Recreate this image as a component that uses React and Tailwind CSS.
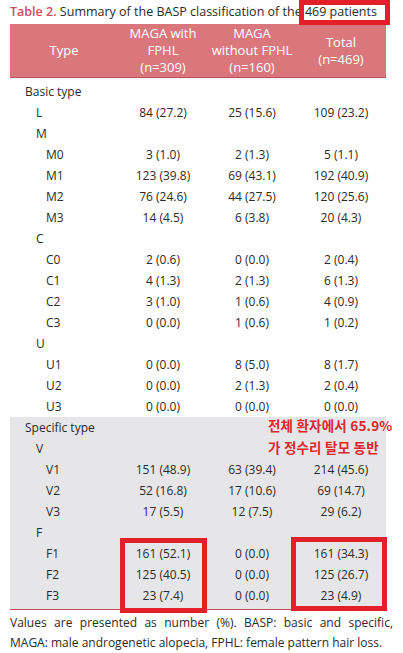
import React from 'react';

const basic = [
  ['Basic type', 0],
  ['L', 1, ['84 (27.2)', '25 (15.6)', '109 (23.2)']],
  ['M', 1],
  ['M0', 2, ['3 (1.0)', '2 (1.3)', '5 (1.1)']],
  ['M1', 2, ['123 (39.8)', '69 (43.1)', '192 (40.9)']],
  ['M2', 2, ['76 (24.6)', '44 (27.5)', '120 (25.6)']],
  ['M3', 2, ['14 (4.5)', '6 (3.8)', '20 (4.3)']],
  ['C', 1],
  ['C0', 2, ['2 (0.6)', '0 (0.0)', '2 (0.4)']],
  ['C1', 2, ['4 (1.3)', '2 (1.3)', '6 (1.3)']],
  ['C2', 2, ['3 (1.0)', '1 (0.6)', '4 (0.9)']],
  ['C3', 2, ['0 (0.0)', '1 (0.6)', '1 (0.2)']],
  ['U', 1],
  ['U1', 2, ['0 (0.0)', '8 (5.0)', '8 (1.7)']],
  ['U2', 2, ['0 (0.0)', '2 (1.3)', '2 (0.4)']],
  ['U3', 2, ['0 (0.0)', '0 (0.0)', '0 (0.0)']],
];

const specific = [
  ['Specific type', 0],
  ['V', 1],
  ['V1', 2, ['151 (48.9)', '63 (39.4)', '214 (45.6)']],
  ['V2', 2, ['52 (16.8)', '17 (10.6)', '69 (14.7)']],
  ['V3', 2, ['17 (5.5)', '12 (7.5)', '29 (6.2)']],
  ['F', 1],
  ['F1', 2, ['161 (52.1)', '0 (0.0)', '161 (34.3)']],
  ['F2', 2, ['125 (40.5)', '0 (0.0)', '125 (26.7)']],
  ['F3', 2, ['23 (7.4)', '0 (0.0)', '23 (4.9)']],
];

const pads = ['pl-[15px]', 'pl-[26px]', 'pl-[36px]'];

function Row({ label, level, values }) {
  return (
    <div className="grid grid-cols-[108px_90px_88px_90px] h-[21px] items-center">
      <div className={pads[level]}>{label}</div>
      {values && values.map((v, i) => (
        <div key={i} className="text-center">{v}</div>
      ))}
    </div>
  );
}

export default function App() {
  return (
    <div className="relative w-[403px] h-[653px] bg-white text-[#2b2b2b] font-['Open_Sans',sans-serif] overflow-hidden">
      <p className="h-[24px] pl-[10px] text-[12.5px] leading-[24px] whitespace-nowrap">
        <span className="text-[#c8505e] font-semibold">Table 2.</span> Summary of the BASP classification of the 469 patients
      </p>

      <div className="ml-[10px] w-[376px] text-[12px]">
        <div className="grid grid-cols-[108px_90px_88px_90px] h-[54px] items-center bg-[#d9777c] text-white text-[13px] leading-[17px] text-center border-b border-[#b9525a]">
          <div>Type</div>
          <div>MAGA with<br />FPHL<br />(n=309)</div>
          <div>MAGA<br />without FPHL<br />(n=160)</div>
          <div>Total<br />(n=469)</div>
        </div>

        <div className="pt-[3px]">
          {basic.map(([l, lv, v]) => <Row key={l} label={l} level={lv} values={v} />)}
        </div>

        <div className="bg-[#e6e6e8] pb-[3px] border-b border-[#c0505a]">
          {specific.map(([l, lv, v]) => <Row key={l} label={l} level={lv} values={v} />)}
        </div>
      </div>

      <div className="px-[10px] pt-[3px] text-[12px] leading-[20px]">
        <p className="text-justify [text-align-last:justify]">Values are presented as number (%). BASP: basic and specific,</p>
        <p className="whitespace-nowrap">MAGA: male androgenetic alopecia, FPHL: female pattern hair loss.</p>
      </div>

      <div className="absolute left-[299px] top-0 w-[91px] h-[25px] border-[5px] border-[#e3202a]" />
      <div className="absolute left-[120px] top-[538px] w-[87px] h-[75px] border-[5px] border-[#e3202a]" />
      <div className="absolute left-[291px] top-[537px] w-[96px] h-[74px] border-[5px] border-[#e3202a]" />

      <div className="absolute left-[268px] top-[414px] text-[13.5px] leading-[22px] tracking-[0.2px] font-bold text-[#e0262e] font-['Noto_Sans_CJK_KR',sans-serif] whitespace-nowrap">
        <div>전체 환자에서 65.9%</div>
        <div>가 정수리 탈모 동반</div>
      </div>
    </div>
  );
}
